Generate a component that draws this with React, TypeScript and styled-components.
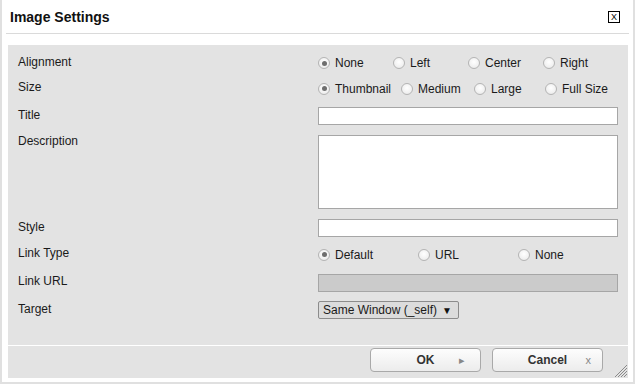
import React from 'react'
import styled, { createGlobalStyle } from 'styled-components'

const GlobalStyle = createGlobalStyle`
  html, body {
    margin: 0;
    padding: 0;
    background: #fff;
    font-family: "Liberation Sans", Arial, sans-serif;
  }
`

const Dialog = styled.div`
  position: relative;
  box-sizing: border-box;
  width: 635px;
  height: 384px;
  border: 2px solid #e0e0e0;
  border-top: none;
  padding: 0 5px 4px 6px;
  display: flex;
  flex-direction: column;
`

const Header = styled.div`
  height: 33px;
  margin: 0 -1px 0 -2px;
  padding: 0 9px 0 4px;
  border-bottom: 1px solid #dadada;
  display: flex;
  align-items: center;
  justify-content: space-between;
`

const Title = styled.div`
  font-size: 14px;
  font-weight: bold;
  color: #111;
  margin-top: 1px;
`

const CloseBox = styled.div`
  box-sizing: border-box;
  width: 12px;
  height: 12px;
  border: 1px solid #000;
  font-size: 9px;
  line-height: 10px;
  text-align: center;
  color: #000;
  margin-top: 1px;
`

const Panel = styled.div`
  margin-top: 11px;
  background: #e3e3e3;
  padding: 5px 10px 0 10px;
  height: 301px;
  box-sizing: border-box;
  border-bottom: 1px solid #fff;
`

const Row = styled.div<{ h: number; top?: boolean }>`
  display: grid;
  grid-template-columns: 300px 300px;
  height: ${(p) => p.h}px;
  align-items: ${(p) => (p.top ? 'start' : 'center')};
`

const Label = styled.div<{ pad?: number }>`
  font-size: 12px;
  color: #1a1a1a;
  line-height: 14px;
  padding-bottom: 3px;
  padding-top: ${(p) => p.pad || 0}px;
`

const Radios = styled.div<{ cols: string }>`
  display: grid;
  grid-template-columns: ${(p) => p.cols};
  align-items: center;
`

const RadioItem = styled.label`
  display: flex;
  align-items: center;
  font-size: 12px;
  color: #1a1a1a;
  white-space: nowrap;
`

const RadioDot = styled.span<{ on?: boolean }>`
  box-sizing: border-box;
  width: 12px;
  height: 12px;
  border-radius: 50%;
  border: 1px solid #b4b4b4;
  background: radial-gradient(circle at 50% 40%, #fff 0, #f1f1f1 60%, #e2e2e2 100%);
  margin-right: 5px;
  display: flex;
  align-items: center;
  justify-content: center;
  &::after {
    content: '';
    display: ${(p) => (p.on ? 'block' : 'none')};
    width: 5px;
    height: 5px;
    border-radius: 50%;
    background: #6e6e6e;
  }
`

const TextInput = styled.input<{ off?: boolean }>`
  box-sizing: border-box;
  width: 300px;
  height: 18px;
  margin: 0;
  border: 1px solid #a6a6a6;
  background: ${(p) => (p.off ? '#cbcbcb' : '#fff')};
  font: 12px "Liberation Sans", Arial, sans-serif;
  padding: 0 3px;
`

const TextArea = styled.textarea`
  box-sizing: border-box;
  width: 300px;
  height: 74px;
  margin: 4px 0 0 0;
  border: 1px solid #a6a6a6;
  background: #fff;
  resize: none;
  display: block;
`

const SelectBox = styled.div`
  box-sizing: border-box;
  width: 141px;
  height: 18px;
  border: 1px solid #8c8c8c;
  border-radius: 2px;
  background: #dcdcdc;
  font-size: 12px;
  color: #1a1a1a;
  display: flex;
  align-items: center;
  justify-content: space-between;
  padding: 0 6px 0 4px;
`

const Arrow = styled.span`
  font-size: 10px;
  color: #111;
`

const Footer = styled.div`
  background: #e3e3e3;
  height: 32px;
  box-sizing: border-box;
  display: flex;
  justify-content: flex-end;
  gap: 11px;
  padding: 2px 25px 0 0;
`

const Button = styled.button`
  box-sizing: border-box;
  width: 111px;
  height: 24px;
  border: 1px solid #a9a9a9;
  border-radius: 4px;
  background: linear-gradient(#fdfdfd, #ececec);
  display: grid;
  grid-template-columns: 1fr auto 1fr;
  align-items: center;
  padding: 0;
  font: bold 12px "Liberation Sans", Arial, sans-serif;
  color: #333;
`

const BtnIcon = styled.span<{ right: number }>`
  justify-self: end;
  margin-right: ${(p) => p.right}px;
  font-weight: normal;
  color: #888;
  font-size: 11px;
`

const Grip = styled.svg`
  position: absolute;
  right: 5px;
  bottom: 4px;
`

interface RadioOpt {
  label: string
  on?: boolean
}

const RadioGroup: React.FC<{ cols: string; opts: Array<RadioOpt> }> = ({ cols, opts }) => (
  <Radios cols={cols}>
    {opts.map((o) => (
      <RadioItem key={o.label}>
        <RadioDot on={o.on} />
        {o.label}
      </RadioItem>
    ))}
  </Radios>
)

export default function App() {
  return (
    <>
      <GlobalStyle />
      <Dialog>
        <Header>
          <Title>Image Settings</Title>
          <CloseBox>X</CloseBox>
        </Header>
        <Panel>
          <Row h={26}>
            <Label>Alignment</Label>
            <RadioGroup
              cols="75px 75px 75px 75px"
              opts={[{ label: 'None', on: true }, { label: 'Left' }, { label: 'Center' }, { label: 'Right' }]}
            />
          </Row>
          <Row h={25}>
            <Label>Size</Label>
            <RadioGroup
              cols="83px 73px 71px 73px"
              opts={[{ label: 'Thumbnail', on: true }, { label: 'Medium' }, { label: 'Large' }, { label: 'Full Size' }]}
            />
          </Row>
          <Row h={30}>
            <Label>Title</Label>
            <TextInput />
          </Row>
          <Row h={83} top>
            <Label pad={3}>Description</Label>
            <TextArea />
          </Row>
          <Row h={28}>
            <Label>Style</Label>
            <TextInput />
          </Row>
          <Row h={25}>
            <Label>Link Type</Label>
            <RadioGroup
              cols="100px 100px 100px"
              opts={[{ label: 'Default', on: true }, { label: 'URL' }, { label: 'None' }]}
            />
          </Row>
          <Row h={31}>
            <Label>Link URL</Label>
            <TextInput off disabled />
          </Row>
          <Row h={24}>
            <Label>Target</Label>
            <SelectBox>
              <span>Same Window (_self)</span>
              <Arrow>▼</Arrow>
            </SelectBox>
          </Row>
        </Panel>
        <Footer>
          <Button>
            <span />
            <span>OK</span>
            <BtnIcon right={15}>▸</BtnIcon>
          </Button>
          <Button>
            <span />
            <span>Cancel</span>
            <BtnIcon right={11}>x</BtnIcon>
          </Button>
        </Footer>
        <Grip width="14" height="14" viewBox="0 0 14 14">
          <g stroke="#8a8a8a" strokeWidth="1">
            <line x1="13" y1="1" x2="1" y2="13" />
            <line x1="13" y1="4" x2="4" y2="13" />
            <line x1="13" y1="7" x2="7" y2="13" />
            <line x1="13" y1="10" x2="10" y2="13" />
          </g>
        </Grip>
      </Dialog>
    </>
  )
}
